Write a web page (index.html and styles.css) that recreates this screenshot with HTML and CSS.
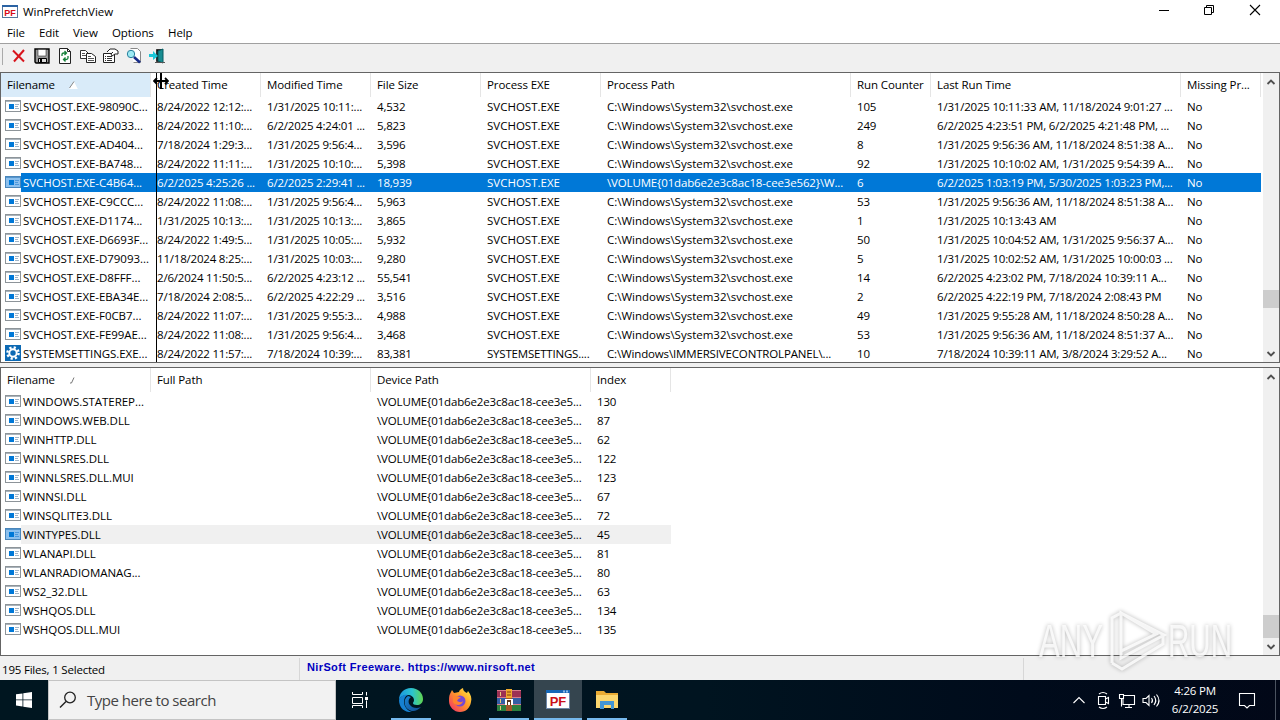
FILE: index.html
```html
<!DOCTYPE html>
<html lang="en">
<head>
  <meta charset="UTF-8" />
  <meta name="viewport" content="width=device-width, initial-scale=1.0" />
  <title>WinPrefetchView</title>
  <link rel="stylesheet" href="styles.css">
</head>
<body>
  <svg width="0" height="0" class="defs">
    <symbol id="icon-app" viewBox="0 0 16 16">
      <rect x="0.5" y="2.5" width="15" height="11" fill="#fff" stroke="#8d9499" />
      <path d="M1 3.500h14" stroke="#a9b3bb" />
      <rect x="4" y="6" width="5" height="5" fill="#0078d7" />
      <path d="M10 6.500h4M10 8.500h3M10 10.500h4" stroke="#9fb4c8" />
    </symbol>
    <symbol id="icon-app-selected" viewBox="0 0 16 16">
      <rect x="0.5" y="2.5" width="15" height="11" fill="#8cc0ee" stroke="#4a86bb" />
      <path d="M1 3.500h14" stroke="#5595cc" />
      <rect x="4" y="6" width="5" height="5" fill="#0078d7" />
      <path d="M10 6.500h4M10 8.500h3M10 10.500h4" stroke="#4d98dc" />
    </symbol>
    <symbol id="icon-gear" viewBox="0 0 16 16">
      <rect width="16" height="16" fill="#0c69b4" />
      <circle cx="8" cy="8" r="5.600" fill="none" stroke="#fff" stroke-width="2.400" stroke-dasharray="2.200 2.198" />
      <circle cx="8" cy="8" r="3.700" fill="none" stroke="#fff" stroke-width="2" />
    </symbol>
  </svg>

  <div class="titlebar">
    <svg class="app-icon" viewBox="0 0 16 14">
      <rect x="0.500" y="0.500" width="15" height="12" fill="#fff" stroke="#57779c" />
      <path d="M0 1h16" stroke="#2a63a4" stroke-width="2" />
      <text x="8" y="10.500" text-anchor="middle" class="pf-small">PF</text>
    </svg>
    <span class="title">WinPrefetchView</span>
    <div class="window-buttons">
      <svg viewBox="0 0 46 23"><path d="M19 10.500h10" stroke="#000" /></svg>
      <svg viewBox="0 0 46 23"><path d="M18.500 7.500h7v7h-7zM20.500 7.500v-2h7v7h-2" fill="none" stroke="#000" /></svg>
      <svg viewBox="0 0 46 23"><path d="M18 5l10 10M28 5L18 15" stroke="#000" stroke-width="1.100" /></svg>
    </div>
  </div>

  <div class="menubar">
    <span class="m-file">File</span>
    <span class="m-edit">Edit</span>
    <span class="m-view">View</span>
    <span class="m-options">Options</span>
    <span class="m-help">Help</span>
  </div>

  <div class="toolbar">
    <svg viewBox="0 0 16 16"><path d="M2 2.500l11 11M13 2L3 13.500" stroke="#d8141c" stroke-width="2" /></svg>
    <svg viewBox="0 0 16 16">
      <path d="M1 1h14v14H2l-1-1z" fill="#999" stroke="#000" stroke-width="1.400" />
      <path d="M4 1.500h8v6.500H4z" fill="#fff" stroke="#333" stroke-width="0.600" /><path d="M4.500 10.500h8v4h-8z" fill="#ddd" stroke="#000" /><path d="M6 11h2v3H6z" />
    </svg>
    <svg viewBox="0 0 16 16">
      <path d="M2.500 0.500h8l3 3v12h-11z" fill="#fff" stroke="#222" /><path d="M10.500 0.500v3h3" fill="none" stroke="#222" />
      <path d="M5 8V6.500Q5 5 7 5h2M7.500 3l2 2-2 2M11 8v2q0 1.500-2 1.500H7M8.500 9.500l-2 2 2 2" fill="none" stroke="#15803a" stroke-width="1.300" />
    </svg>
    <svg viewBox="0 0 16 16">
      <path d="M0.500 2.500h5l3 3v5h-8z" fill="#fff" stroke="#333" /><path d="M2 5.500h3M2 7.500h5" stroke="#555" />
      <path d="M6.500 5.500h5l4 3v6h-9z" fill="#fff" stroke="#222" /><path d="M8 8.500h3M8 10.500h6M8 12.500h6" stroke="#555" />
    </svg>
    <svg viewBox="0 0 16 16">
      <path d="M0.500 5.500h11v9H0.500z" fill="#fff" stroke="#222" /><path d="M2 8.500h1M4 8.500h5M2 10.500h1M4 10.500h5M2 12.500h1M4 12.500h5" stroke="#333" />
      <path d="M4 4l3-3h5l3 2v3h-3L9 8 8 6l2-2" fill="#fff" stroke="#222" />
    </svg>
    <svg viewBox="0 0 16 16">
      <path d="M4.500 0.500h7l3 3v11h-7" fill="#fff" stroke="#888" />
      <circle cx="5" cy="6" r="3.700" fill="#9deaf4" stroke="#287f9c" /><path d="M8 9l6 5.500" stroke="#162a88" stroke-width="2.600" />
    </svg>
    <svg viewBox="0 0 16 16">
      <path d="M7.500 1.500h6v12h-6z" fill="#111" stroke="#333" /><path d="M9 3l5-2v14l-5-2z" fill="#178c91" stroke="#075b60" />
      <path d="M0 6h4V3l5 5-5 4V9H0z" fill="#19c7d8" />
      <path d="M6 14.500h10" stroke="#555" />
    </svg>
  </div>

  <div class="panes">
    <div class="list list-files">
      <div class="list-body">
        <div class="list-header file-grid">
          <span class="sorted">Filename <svg class="sort-arrow" viewBox="0 0 9 8"><path d="M0.500 7.500L5 0.500l3.500 7z" fill="#fff" /><path d="M0.500 7L5 0.500" stroke="#888" /><path d="M0.500 7.500h8" stroke="#fff" /></svg></span>
          <span>Created Time</span><span>Modified Time</span><span>File Size</span><span>Process EXE</span>
          <span>Process Path</span><span>Run Counter</span><span>Last Run Time</span><span>Missing Pr...</span>
        </div>
        <div id="files"></div>
      </div>
      <div class="scrollbar">
        <svg viewBox="0 0 16 17"><path d="M4.500 11L8 7.500l3.500 3.500" /></svg>
        <div class="thumb thumb-files"></div>
        <svg viewBox="0 0 16 17"><path d="M4.500 7L8 10.500l3.500-3.500" /></svg>
      </div>
      <div class="resize-line"></div>
      <svg class="resize-cursor" viewBox="0 0 16 16">
        <path d="M8 0v16" stroke="#000" stroke-width="2" /><path d="M2 8h12M4 5L1 8l3 3M12 5l3 3-3 3" fill="none" stroke="#000" stroke-width="1.800" />
      </svg>
    </div>

    <div class="list list-modules">
      <div class="list-body">
        <div class="list-header module-grid">
          <span>Filename <svg class="sort-arrow" viewBox="0 0 9 8"><path d="M1 7h1.500L5 1.500" fill="none" stroke="#777" /></svg></span>
          <span>Full Path</span><span>Device Path</span><span>Index</span>
        </div>
        <div id="modules"></div>
      </div>
      <div class="scrollbar">
        <svg viewBox="0 0 16 17"><path d="M4.500 11L8 7.500l3.500 3.500" /></svg>
        <div class="thumb thumb-modules"></div>
        <svg viewBox="0 0 16 17"><path d="M4.500 7L8 10.500l3.500-3.500" /></svg>
      </div>
    </div>
  </div>

  <div class="statusbar">
    <span class="status-count">195 Files, 1 Selected</span>
    <span class="status-link">NirSoft Freeware. https://www.nirsoft.net</span>
    <span class="status-end"></span>
  </div>

  <div class="taskbar">
    <div class="start">
      <svg width="16" height="16" viewBox="0 0 16 16"><path d="M0 2.300L6.500 1.400v6.100H0zM7.300 1.300L16 0v7.500H7.300zM0 8.300h6.500v6.200L0 13.600zM7.300 8.300H16V16l-8.700-1.300z" fill="#fff" /></svg>
    </div>
    <div class="search">
      <svg width="18" height="18" viewBox="0 0 18 18"><circle cx="11" cy="6.500" r="5.300" fill="none" stroke="#222" stroke-width="1.300" /><path d="M7 10.500L1 16.500" stroke="#222" stroke-width="1.500" /></svg>
      <span>Type here to search</span>
    </div>
    <div class="task task-view">
      <svg width="18" height="18" viewBox="0 0 18 18" fill="none" stroke="#fff"><path d="M1.500 1v2.500h10V1M1.500 6.500h10v6h-10zM1.500 17v-2.500h10V17M15.500 1v3.500M15.500 9.500V17" /><path d="M14 6h3v3h-3z" fill="#fff" stroke="none" /></svg>
    </div>
    <div class="task running">
      <svg width="24" height="24" viewBox="0 0 24 24">
        <defs>
          <linearGradient id="edge-top" x1="0" x2="1"><stop offset="0" stop-color="#1b96de" /><stop offset="0.550" stop-color="#2bc4cf" /><stop offset="1" stop-color="#61d64f" /></linearGradient>
          <linearGradient id="edge-low" x1="0" y1="0" x2="1" y2="1"><stop offset="0" stop-color="#1986d4" /><stop offset="1" stop-color="#124c92" /></linearGradient>
        </defs>
        <path d="M0 12C0 5 5 0 12 0s12 5 12 11c0 4-3 6-6 6-3 0-4-1-4-2s1-1 1-3c0-3-3-5-6-5C4 7 1 9 0 12z" fill="url(#edge-top)" />
        <path d="M0 12C1 8 5 6 9 7 6 8 5 11 5 14c0 5 4 9 8 10C5 25 0 19 0 12z" fill="#1681d1" />
        <path d="M9 8c-3 2-4 5-3 9 2 6 10 9 16 2-4 2-9 1-11-2-2-2-2-6 1-8z" fill="url(#edge-low)" />
      </svg>
    </div>
    <div class="task">
      <svg width="24" height="24" viewBox="0 0 24 24">
        <defs><linearGradient id="fox" x1="1" y1="0" x2="0" y2="1"><stop offset="0" stop-color="#fff04a" /><stop offset="0.450" stop-color="#ff9a28" /><stop offset="1" stop-color="#f0276c" /></linearGradient></defs>
        <path d="M2 6l2-4 2 3 5-1c0-2 2-3 4-4 0 3 2 4 4 5l1-2c3 4 4 7 3 11-1 6-5 10-11 10S1 19 1 13c0-3 0-5 1-7z" fill="url(#fox)" />
        <circle cx="12" cy="13" r="5.500" fill="#7548d5" /><path d="M5 8c4 0 5 0 8 2-2 0-3 1-4 3 2 1 4 2 6 0-1 5-8 5-10 1z" fill="#ff832e" />
      </svg>
    </div>
    <div class="task running">
      <svg width="24" height="23" viewBox="0 0 24 23">
        <path d="M0 1h24v7H0z" fill="#9c3154" /><path d="M0 8h24v7H0z" fill="#345ea5" /><path d="M0 15h24v7H0z" fill="#2c7f3f" />
        <path d="M0 1.500h24M0 8.500h24M0 15.500h24" stroke="#d77b8a" /><path d="M3.500 3v4M3.500 10v4M3.500 17v4" stroke="#e9cc7a" />
        <path d="M9 0h6v22H9z" fill="#a4552b" /><path d="M9 0h6v9H9z" fill="#efa92d" /><path d="M10 3h4M10 6h4" stroke="#823a13" /><path d="M8 10h8v6H8z" fill="#fff" /><path d="M10 11h4v5h-1v-3h-2v3h-1z" fill="#5c351f" />
      </svg>
    </div>
    <div class="task running active">
      <svg width="24" height="20" viewBox="0 0 24 20">
        <rect x="0.500" y="0.500" width="23" height="18" fill="#fff" stroke="#6d87a8" />
        <path d="M0 0h24v3H0z" fill="#1667b7" />
        <path d="M17 0.500h2v2h-2zM20 0.500h2v2h-2z" fill="#8dbbe8" />
        <text x="12" y="15.500" text-anchor="middle" class="pf-text">PF</text>
      </svg>
    </div>
    <div class="task running">
      <svg width="22" height="20" viewBox="0 0 22 20">
        <path d="M0 1h8l2 2h12v15H0z" fill="#e9ab34" /><path d="M0 5h22v13H0z" fill="#fbd66e" /><path d="M4 11h14v8h-3v-4H8v4H4z" fill="#4295d4" />
      </svg>
    </div>
    <div class="tray">
      <svg class="tray-chevron" viewBox="0 0 24 24"><path d="M6.500 15l5.500-5.500 5.500 5.500" /></svg>
      <svg viewBox="0 0 24 24"><path d="M7.500 8.500h7v8h-7zM14.500 11l3-1.500v6l-3-1.500M8 6q4-3 8 0M8 19q4 3 8 0" /></svg>
      <svg viewBox="0 0 24 24"><path d="M9 7.500h10.500v9H8v-6M4.500 6.500h4v4h-4zM6.500 10.500v8M14 16.500v3M10 19.500h7" /></svg>
      <svg viewBox="0 0 24 24"><path d="M4 10.500h3l3-3v10l-3-3H4zM12.500 10q2 2.500 0 5M15 8q3.500 4.500 0 9M17.500 6.500q5 6 0 12" /></svg>
      <div class="clock"><span>4:26 PM</span><span>6/2/2025</span></div>
      <svg class="notify" viewBox="0 0 24 24"><path d="M4.500 5.500h15v12h-5L12 20l-2.500-2.500h-5z" /></svg>
    </div>
    <div class="show-desktop"></div>
  </div>

  <svg class="watermark" viewBox="0 0 210 80">
    <g class="mark">
      <text x="9" y="57" textLength="64" lengthAdjust="spacingAndGlyphs">ANY</text>
      <text x="138" y="57" textLength="64" lengthAdjust="spacingAndGlyphs">RUN</text>
      <path d="M91 13v38l35-17zM91 13l-9 5v45M91 51v7l43-23-43-22M82 63l10 6 41-25v-9" />
    </g>
  </svg>

  <script>
    const files = [
      ["SVCHOST.EXE-98090C...", "8/24/2022 12:12:...", "1/31/2025 10:11:...", "4,532", "105", "1/31/2025 10:11:33 AM, 11/18/2024 9:01:27 ..."],
      ["SVCHOST.EXE-AD033...", "8/24/2022 11:10:...", "6/2/2025 4:24:01 ...", "5,823", "249", "6/2/2025 4:23:51 PM, 6/2/2025 4:21:48 PM, ..."],
      ["SVCHOST.EXE-AD404...", "7/18/2024 1:29:3...", "1/31/2025 9:56:4...", "3,596", "8", "1/31/2025 9:56:36 AM, 11/18/2024 8:51:38 A..."],
      ["SVCHOST.EXE-BA748...", "8/24/2022 11:11:...", "1/31/2025 10:10:...", "5,398", "92", "1/31/2025 10:10:02 AM, 1/31/2025 9:54:39 A..."],
      ["SVCHOST.EXE-C4B64...", "6/2/2025 4:25:26 ...", "6/2/2025 2:29:41 ...", "18,939", "6", "6/2/2025 1:03:19 PM, 5/30/2025 1:03:23 PM,..."],
      ["SVCHOST.EXE-C9CCC...", "8/24/2022 11:08:...", "1/31/2025 9:56:4...", "5,963", "53", "1/31/2025 9:56:36 AM, 11/18/2024 8:51:38 A..."],
      ["SVCHOST.EXE-D1174...", "1/31/2025 10:13:...", "1/31/2025 10:13:...", "3,865", "1", "1/31/2025 10:13:43 AM"],
      ["SVCHOST.EXE-D6693F...", "8/24/2022 1:49:5...", "1/31/2025 10:05:...", "5,932", "50", "1/31/2025 10:04:52 AM, 1/31/2025 9:56:37 A..."],
      ["SVCHOST.EXE-D79093...", "11/18/2024 8:25:...", "1/31/2025 10:03:...", "9,280", "5", "1/31/2025 10:02:52 AM, 1/31/2025 10:00:03 ..."],
      ["SVCHOST.EXE-D8FFF...", "2/6/2024 11:50:5...", "6/2/2025 4:23:12 ...", "55,541", "14", "6/2/2025 4:23:02 PM, 7/18/2024 10:39:11 A..."],
      ["SVCHOST.EXE-EBA34E...", "7/18/2024 2:08:5...", "6/2/2025 4:22:29 ...", "3,516", "2", "6/2/2025 4:22:19 PM, 7/18/2024 2:08:43 PM"],
      ["SVCHOST.EXE-F0CB7...", "8/24/2022 11:07:...", "1/31/2025 9:55:3...", "4,988", "49", "1/31/2025 9:55:28 AM, 11/18/2024 8:50:28 A..."],
      ["SVCHOST.EXE-FE99AE...", "8/24/2022 11:08:...", "1/31/2025 9:56:4...", "3,468", "53", "1/31/2025 9:56:36 AM, 11/18/2024 8:51:37 A..."],
      ["SYSTEMSETTINGS.EXE...", "8/24/2022 11:57:...", "7/18/2024 10:39:...", "83,381", "10", "7/18/2024 10:39:11 AM, 3/8/2024 3:29:52 A..."],
    ];

    const modules = [
      ["WINDOWS.STATEREP...", 130],
      ["WINDOWS.WEB.DLL", 87],
      ["WINHTTP.DLL", 62],
      ["WINNLSRES.DLL", 122],
      ["WINNLSRES.DLL.MUI", 123],
      ["WINNSI.DLL", 67],
      ["WINSQLITE3.DLL", 72],
      ["WINTYPES.DLL", 45],
      ["WLANAPI.DLL", 81],
      ["WLANRADIOMANAG...", 80],
      ["WS2_32.DLL", 63],
      ["WSHQOS.DLL", 134],
      ["WSHQOS.DLL.MUI", 135],
    ];

    function nameCell(name, icon) {
      return `<span class="name"><svg class="file-icon"><use href="#${icon}"/></svg><span class="label">${name}</span></span>`;
    }

    function fileRow([name, created, modified, size, count, lastRun], i) {
      const settings = name.startsWith("SYSTEM");
      const selected = i === 4;
      let icon = "icon-app";
      let path = "C:\\Windows\\System32\\svchost.exe";
      if (settings) {
        icon = "icon-gear";
        path = "C:\\Windows\\IMMERSIVECONTROLPANEL\\...";
      }
      if (selected) {
        icon = "icon-app-selected";
        path = "\\VOLUME{01dab6e2e3c8ac18-cee3e562}\\W...";
      }
      return `<div class="row file-grid${selected ? " selected" : ""}">
        ${nameCell(name, icon)}
        <span>${created}</span><span>${modified}</span><span>${size}</span>
        <span class="${settings ? "" : "exe"}">${settings ? "SYSTEMSETTINGS...." : "SVCHOST.EXE"}</span>
        <span class="${settings || selected ? "volume" : "path"}">${path}</span>
        <span>${count}</span><span>${lastRun}</span><span>No</span>
      </div>`;
    }

    function moduleRow([name, index]) {
      const focused = name === "WINTYPES.DLL";
      return `<div class="row module-grid${focused ? " focused" : ""}">
        ${nameCell(name, focused ? "icon-app-selected" : "icon-app")}<span></span>
        <span class="volume">\\VOLUME{01dab6e2e3c8ac18-cee3e5...</span><span>${index}</span>
      </div>`;
    }

    document.getElementById("files").innerHTML = files.map(fileRow).join("");
    document.getElementById("modules").innerHTML = modules.map(moduleRow).join("");
  </script>
</body>
</html>
```

FILE: styles.css
```css
* {
  box-sizing: border-box;
}
body {
  margin: 0;
  width: 1280px;
  height: 720px;
  overflow: hidden;
  display: flex;
  flex-direction: column;
  font-family: "Open Sans", "Noto Sans", sans-serif;
  font-size: 11.5px;
  letter-spacing: -0.2px;
  color: #000;
  background: #fff;
  position: relative;
}
.defs {
  position: absolute;
}
.titlebar {
  height: 23px;
  display: flex;
  align-items: center;
  padding-left: 2px;
}
.app-icon {
  width: 16px;
  height: 14px;
}
.pf-small {
  font: bold 9px "Liberation Sans", sans-serif;
  fill: #d90c17;
  letter-spacing: 0;
}
.pf-text {
  font: bold 13px "Liberation Sans", sans-serif;
  fill: #cc1019;
  letter-spacing: 0;
}
.title {
  margin-left: 5px;
  letter-spacing: -0.05px;
}
.window-buttons {
  margin-left: auto;
  display: flex;
}
.window-buttons svg {
  width: 46px;
  height: 23px;
}
.window-buttons svg:last-child {
  margin-right: 2px;
}
.menubar {
  height: 20px;
  display: flex;
  align-items: center;
  padding: 0 0 2px 7px;
  letter-spacing: -0.1px;
}
.m-file { width: 32px; }
.m-edit { width: 34px; }
.m-view { width: 39px; }
.m-options { width: 56px; }
.toolbar {
  height: 29px;
  background: #f0f0f0;
  border-top: 1px solid #a0a0a0;
  display: flex;
  align-items: center;
  gap: 7px;
  padding: 0 0 4px 8px;
  background-image: linear-gradient(#aaa, #aaa);
  background-size: 1px 17px;
  background-position: 2px 4px;
  background-repeat: no-repeat;
}
.toolbar svg {
  width: 16px;
  height: 16px;
}
.toolbar svg:first-child {
  margin-left: 3px;
}
.panes {
  height: 584px;
  display: flex;
  flex-direction: column;
  gap: 4px;
  background: #f0f0f0;
}
.list {
  display: flex;
  background: #fff;
  border: 1px solid #646464;
  position: relative;
}
.list-files {
  height: 291px;
}
.list-modules {
  height: 289px;
}
.list-body {
  flex: 1;
  overflow: hidden;
}
.file-grid {
  display: grid;
  grid-template-columns: 150px 110px 110px 110px 120px 250px 80px 250px 80px;
  width: 1260px;
}
.module-grid {
  display: grid;
  grid-template-columns: 150px 220px 220px 80px;
  width: 670px;
}
.list-header {
  height: 24px;
  line-height: 24px;
  letter-spacing: -0.1px;
}
.list-header span {
  padding-left: 6px;
  border-right: 1px solid #e5e5e5;
  white-space: nowrap;
}
.list-header .sorted {
  background: #d9ebf9;
}
.sort-arrow {
  width: 9px;
  height: 8px;
  margin-left: 11px;
}
.row {
  height: 19px;
  line-height: 19px;
  white-space: pre;
}
.row > span {
  padding-left: 6px;
  overflow: hidden;
}
.row > .name {
  display: flex;
  padding-left: 4px;
  letter-spacing: -0.05px;
}
.row > .exe {
  letter-spacing: 0;
}
.row > .path {
  letter-spacing: 0;
}
.row > .volume {
  letter-spacing: -0.15px;
}
.file-icon {
  width: 16px;
  height: 16px;
  margin-top: 1px;
}
.label {
  flex: 1;
  padding-left: 2px;
}
.selected {
  color: #fff;
  background: linear-gradient(90deg, #fff 20px, #0078d7 20px);
}
.focused {
  background: linear-gradient(90deg, #fff 20px, #f0f0f0 20px);
}
.scrollbar {
  width: 16px;
  background: #f0f0f0;
  display: flex;
  flex-direction: column;
}
.scrollbar svg {
  width: 16px;
  height: 17px;
  fill: none;
  stroke: #505050;
  stroke-width: 1.8;
}
.thumb {
  background: #cdcdcd;
  margin-bottom: auto;
}
.thumb-files {
  height: 18px;
  margin-top: 200px;
}
.thumb-modules {
  height: 23px;
  margin-top: 230px;
}
.resize-line {
  position: absolute;
  left: 155px;
  top: 0;
  width: 1px;
  height: 289px;
  background: #000;
}
.resize-cursor {
  position: absolute;
  left: 152px;
  top: 0;
  width: 16px;
  height: 16px;
}
.statusbar {
  height: 24px;
  background: #f0f0f0;
  display: flex;
  padding-top: 2px;
}
.status-count {
  width: 300px;
  padding-left: 2px;
  line-height: 23px;
  border-right: 1px solid #d7d7d7;
}
.status-link {
  width: 724px;
  padding-left: 7px;
  font: bold 11px/18px "Liberation Sans", sans-serif;
  letter-spacing: 0.37px;
  color: #0000c0;
  border-right: 1px solid #d7d7d7;
}
.taskbar {
  height: 40px;
  display: flex;
  background: linear-gradient(90deg, #001620, #001420 55%, #000b1b 80%, #020818);
}
.start {
  width: 48px;
  display: flex;
  align-items: center;
  justify-content: center;
}
.search {
  width: 288px;
  background: #f2f2f2;
  border: 1px solid #c4c4c4;
  display: flex;
  align-items: center;
  gap: 10px;
  padding-left: 10px;
  font-size: 15px;
  letter-spacing: -0.48px;
  color: #444;
}
.task {
  width: 48px;
  margin-right: 1px;
  display: flex;
  align-items: center;
  justify-content: center;
  background-repeat: no-repeat;
}
.task-view {
  margin-right: 3px;
}
.running {
  background-image: linear-gradient(#76b9ed, #76b9ed);
  background-size: 40px 2px;
  background-position: 4px 38px;
}
.active {
  background-color: #35454f;
  background-size: 48px 2px;
  background-position: 0 38px;
}
.tray {
  margin-left: auto;
  display: flex;
  align-items: center;
  color: #fff;
}
.tray svg {
  width: 24px;
  height: 24px;
  fill: none;
  stroke: #fff;
  stroke-width: 1.1;
}
.clock {
  width: 64px;
  display: flex;
  flex-direction: column;
  align-items: center;
  line-height: 18px;
}
.tray .notify {
  margin: 0 16px 0 8px;
}
.show-desktop {
  width: 5px;
  border-left: 1px solid #4b5360;
}
.watermark {
  position: absolute;
  left: 1030px;
  top: 600px;
  width: 210px;
  height: 80px;
}
.mark {
  font: 46px "Liberation Sans", sans-serif;
  letter-spacing: 0;
  fill: #fff;
  fill-opacity: 0.8;
  filter: drop-shadow(0 0 2px rgba(0, 0, 0, 0.35));
}
.mark path {
  fill: none;
  stroke: #fff;
  stroke-opacity: 0.8;
  stroke-width: 3;
}
```
